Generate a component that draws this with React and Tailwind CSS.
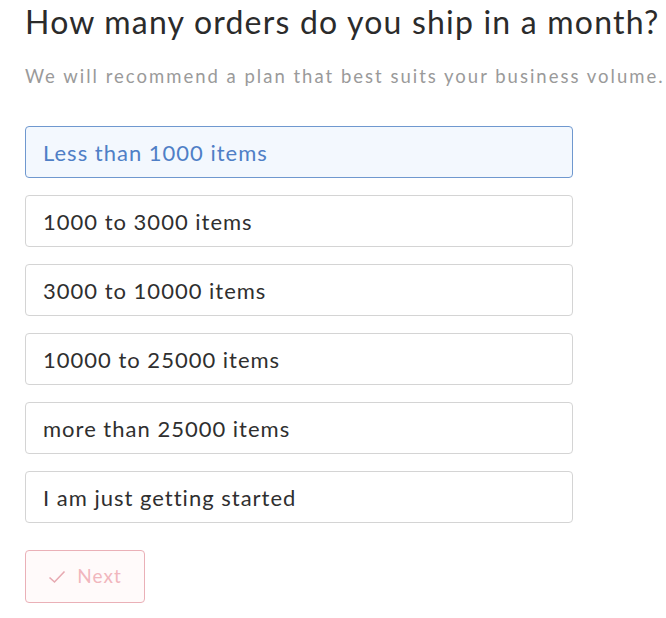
import { useState } from 'react'

const OPTIONS = [
  'Less than 1000 items',
  '1000 to 3000 items',
  '3000 to 10000 items',
  '10000 to 25000 items',
  'more than 25000 items',
  'I am just getting started',
]

export default function App() {
  const [selected, setSelected] = useState(0)

  return (
    <main className="min-h-screen bg-white pl-[25px] pt-[2px] font-['Lato',sans-serif]">
      <h1 className="text-[32px] leading-[40px] tracking-[1.2px] text-[#2b2b2b] whitespace-nowrap">
        How many orders do you ship in a month?
      </h1>
      <p className="mt-[22px] text-[18.5px] leading-[24px] tracking-[2px] text-[#9a9a9a] whitespace-nowrap">
        We will recommend a plan that best suits your business volume.
      </p>

      <ul className="mt-[38px] flex w-[548px] flex-col gap-[17px]">
        {OPTIONS.map((label, i) => (
          <li key={label}>
            <button
              type="button"
              onClick={() => setSelected(i)}
              className={
                i === selected
                  ? 'flex h-[52px] w-full items-center rounded-[4px] border border-[#6f98cf] bg-[#f3f8fe] px-[17px] text-left text-[22px] tracking-[1px] text-[#4f7fc6]'
                  : 'flex h-[52px] w-full items-center rounded-[4px] border border-[#d4d4d4] bg-white px-[17px] text-left text-[22px] tracking-[1px] text-[#2f2f2f]'
              }
            >
              {label}
            </button>
          </li>
        ))}
      </ul>

      <button
        type="button"
        className="mt-[27px] flex h-[53px] w-[120px] items-center justify-center gap-[11px] rounded-[4px] border border-[#eab0b7] bg-[#fffafa] text-[19px] tracking-[1px] text-[#f1b6bd]"
      >
        <svg width="18" height="14" viewBox="0 0 18 14" fill="none" stroke="#e7a9b1" strokeWidth="1.6">
          <path d="M1.5 7.5 L6.5 12 L16.5 1.5" />
        </svg>
        Next
      </button>
    </main>
  )
}
